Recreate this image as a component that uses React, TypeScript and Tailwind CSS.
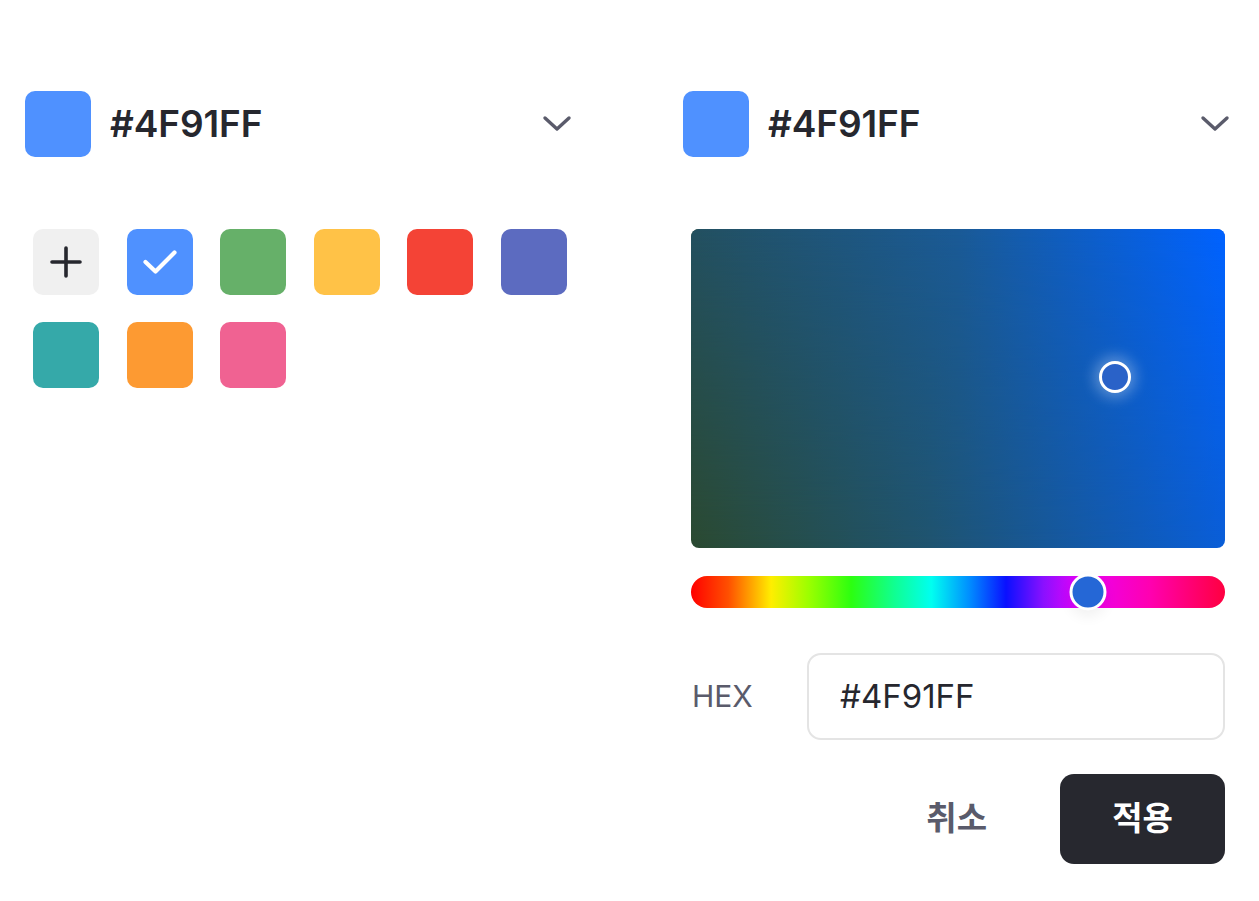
import { useState } from "react";

const SWATCHES = [
  "#4f91ff", // blue
  "#66b069", // green
  "#ffc247", // yellow
  "#f44336", // red
  "#5c6bc0", // indigo
  "#35a9a9", // teal
  "#fd9a32", // orange
  "#f06292", // pink
];

function ChevronDown() {
  return (
    <svg width="30" height="18" viewBox="0 0 30 18" fill="none">
      <path
        d="M3 3l12 11L27 3"
        stroke="#5a5b6b"
        strokeWidth="3.4"
        strokeLinecap="round"
        strokeLinejoin="round"
      />
    </svg>
  );
}

function Header() {
  return (
    <div className="flex h-[66px] items-center justify-between">
      <div className="flex items-center">
        <div className="h-[66px] w-[66px] rounded-[10px] bg-[#4f91ff]" />
        <span className="ml-[19px] text-[37px] font-semibold tracking-[-0.1px] text-[#26272e]">
          #4F91FF
        </span>
      </div>
      <div className="mr-[3px] flex items-center">
        <ChevronDown />
      </div>
    </div>
  );
}

function SwatchGrid() {
  const [selected, setSelected] = useState(0);
  return (
    <div className="mt-[72px] flex flex-wrap gap-x-[27.6px] gap-y-[27px] px-2">
      <button className="flex h-[66px] w-[66px] items-center justify-center rounded-[10px] bg-[#f0f0f0]">
        <svg width="34" height="34" viewBox="0 0 34 34" fill="none">
          <path
            d="M17 3v28M3 17h28"
            stroke="#26272e"
            strokeWidth="3.6"
            strokeLinecap="round"
          />
        </svg>
      </button>
      {SWATCHES.map((c, i) => (
        <button
          key={c}
          onClick={() => setSelected(i)}
          className="flex h-[66px] w-[66px] items-center justify-center rounded-[10px]"
          style={{ backgroundColor: c }}
        >
          {selected === i && (
            <svg width="38" height="28" viewBox="0 0 38 28" fill="none">
              <path
                d="M4.5 14l10 9.5L33.5 4.5"
                stroke="#ffffff"
                strokeWidth="4.2"
                strokeLinecap="round"
                strokeLinejoin="round"
              />
            </svg>
          )}
        </button>
      ))}
    </div>
  );
}

function Picker() {
  return (
    <div className="mt-[72px] px-2">
      {/* saturation / value area */}
      <div className="relative h-[319px] w-full overflow-hidden rounded-[8px] bg-[linear-gradient(to_right,#2b4a31_0%,#1f5470_45%,#0a5ed8_100%)]">
        <div className="absolute inset-0 bg-[linear-gradient(to_right,#235060_0%,#1a5a96_50%,#0062ff_100%)] [mask-image:linear-gradient(to_bottom,black_0%,transparent_100%)]" />
        <div className="absolute left-[79.4%] top-[46.4%] h-[32px] w-[32px] -translate-x-1/2 -translate-y-1/2 rounded-full border-[3.5px] border-white bg-[#2a62c8] shadow-[0_0_14px_5px_rgba(255,255,255,0.3)]" />
      </div>

      {/* hue slider */}
      <div className="relative mt-[28px] h-[32px] w-full rounded-full bg-[linear-gradient(to_right,#ff0000_0%,#ff5000_7%,#ffee00_15%,#9cff00_22%,#2cff10_30%,#10ff90_38%,#00fff0_45%,#0090ff_52%,#0a10ff_59%,#8a10ff_66%,#e800f8_73%,#ff00b0_86%,#ff0040_100%)]">
        <div className="absolute left-[74.3%] top-1/2 h-[37px] w-[37px] -translate-x-1/2 -translate-y-1/2 rounded-full border-[3px] border-white bg-[#2567d6] shadow-[0_6px_14px_rgba(0,0,0,0.06)]" />
      </div>

      {/* hex input */}
      <div className="mt-[45px] flex items-center">
        <span className="w-[116px] pl-px text-[30px] text-[#5a5b6b]">HEX</span>
        <div className="flex h-[87px] flex-1 items-center rounded-[14px] border-2 border-[#e4e4e4] pl-[31px] text-[33px] text-[#26272e]">
          #4F91FF
        </div>
      </div>

      {/* actions */}
      <div className="mt-[34px] flex items-center justify-end gap-[73px]">
        <button className="text-[33px] font-semibold text-[#5a5b6b]">취소</button>
        <button className="h-[90px] w-[165px] rounded-[14px] bg-[#27282f] text-[33px] font-semibold text-white">
          적용
        </button>
      </div>
    </div>
  );
}

export default function App() {
  return (
    <div className="min-h-[901px] bg-white font-['Inter','Noto_Sans_CJK_KR',sans-serif]">
      <div className="flex gap-[108px] px-[25px] pt-[91px]">
        <div className="w-[550px]">
          <Header />
          <SwatchGrid />
        </div>
        <div className="w-[550px]">
          <Header />
          <Picker />
        </div>
      </div>
    </div>
  );
}
